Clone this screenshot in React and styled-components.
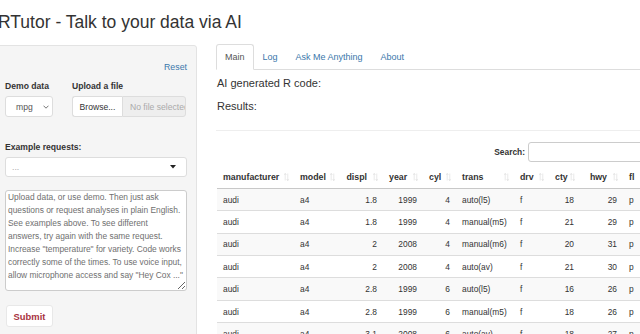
import React from 'react';
import styled, { createGlobalStyle } from 'styled-components';

const GlobalStyle = createGlobalStyle`
  html, body { margin: 0; padding: 0; overflow: hidden; background: #fff; }
  body {
    font-family: "Liberation Sans", Arial, Helvetica, sans-serif;
    color: #333;
    width: 640px;
    height: 334px;
  }
  * { box-sizing: border-box; }
`;

const Page = styled.div`
  width: 640px;
  height: 334px;
  overflow: hidden;
`;

const Title = styled.h2`
  margin: 0 0 0 -2px;
  padding-top: 12px;
  height: 43px;
  font-size: 17.5px;
  line-height: 20px;
  font-weight: normal;
  color: #333;
  white-space: nowrap;
`;

const Row = styled.div`
  display: flex;
  align-items: flex-start;
`;

const Well = styled.div`
  flex: 0 0 204px;
  margin-left: -7px;
  margin-top: 2px;
  height: 320px;
  background: #f5f5f5;
  border: 1px solid #e3e3e3;
  border-radius: 3px;
  padding: 12px 9px 12px 11px;
`;

const ResetRow = styled.div`
  display: flex;
  justify-content: flex-end;
  padding-top: 3px;
`;

const Link = styled.a`
  font-size: 8.8px;
  line-height: 13px;
  color: #3a77ab;
  text-decoration: none;
`;

const FieldRow = styled.div`
  display: flex;
  gap: 19px;
  margin-top: 6px;
`;

const Field = styled.div`
  display: flex;
  flex-direction: column;
  width: ${(p) => p.$width || 'auto'};
  margin-top: ${(p) => p.$top || 0}px;
`;

const Label = styled.label`
  font-size: 8.6px;
  font-weight: bold;
  line-height: 13px;
  margin-bottom: 3px;
  color: #333;
  white-space: nowrap;
`;

const SelectBox = styled.div`
  height: ${(p) => p.$h || 21}px;
  display: flex;
  align-items: center;
  justify-content: space-between;
  background: #fff;
  border: 1px solid ${(p) => p.$border || '#ccc'};
  border-radius: 3px;
  padding: 0 ${(p) => p.$pr || 3}px 0 ${(p) => p.$pl || 9}px;
  font-size: 8.6px;
  color: ${(p) => p.$color || '#555'};
`;

const FileInput = styled.div`
  display: flex;
  height: 21px;
  width: 114px;
  font-size: 8.6px;
`;

const BrowseButton = styled.div`
  flex: 0 0 50px;
  display: flex;
  align-items: center;
  justify-content: center;
  background: #fff;
  border: 1px solid #ddd;
  border-right: none;
  border-radius: 3px 0 0 3px;
  color: #333;
`;

const FileName = styled.div`
  flex: 1;
  display: flex;
  align-items: center;
  padding-left: 7px;
  background: #eee;
  border: 1px solid #ddd;
  border-radius: 0 3px 3px 0;
  color: #aaa;
  overflow: hidden;
  white-space: nowrap;
`;

const TextArea = styled.textarea`
  display: block;
  margin-top: 13px;
  width: 100%;
  height: 101px;
  border: 1px solid #ccc;
  border-radius: 3px;
  background: #fff;
  padding: 0 2px;
  font-family: "Liberation Sans", Arial, Helvetica, sans-serif;
  font-size: 8.4px;
  line-height: 13.05px;
  color: #555;
  overflow: hidden;
  resize: vertical;
  &::placeholder { color: #6f6f6f; opacity: 1; }
`;

const SubmitButton = styled.button`
  display: block;
  margin-top: 14px;
  margin-left: 1px;
  width: 47px;
  height: 22px;
  padding: 0;
  background: #fff;
  border: 1px solid #e8e8e8;
  border-radius: 3px;
  font-family: "Liberation Sans", Arial, Helvetica, sans-serif;
  font-size: 9.4px;
  font-weight: bold;
  color: #a83240;
`;

const Main = styled.div`
  flex: 0 0 460px;
  margin-left: 19px;
  margin-top: 1px;
`;

const Tabs = styled.ul`
  display: flex;
  margin: 0;
  padding: 0;
  list-style: none;
  border-bottom: 1px solid #ddd;
`;

const Tab = styled.li`
  margin-bottom: -1px;
  padding: 6px 8px;
  font-size: 9px;
  line-height: 12px;
  border: 1px solid ${(p) => (p.$active ? '#ddd' : 'transparent')};
  border-bottom-color: ${(p) => (p.$active ? '#fff' : 'transparent')};
  border-radius: 3px 3px 0 0;
  background: ${(p) => (p.$active ? '#fff' : 'transparent')};
  color: ${(p) => (p.$active ? '#555' : '#3a77ab')};
  white-space: nowrap;
`;

const Heading = styled.div`
  font-size: 11px;
  line-height: 15.7px;
  margin-top: ${(p) => p.$top}px;
  margin-left: 1px;
  color: #333;
`;

const Rule = styled.div`
  margin-top: 16px;
  height: 1px;
  background: #eee;
`;

const SearchRow = styled.div`
  display: flex;
  justify-content: flex-end;
  align-items: center;
  gap: 3px;
  margin-top: 11px;
`;

const SearchLabel = styled.label`
  font-size: 8.4px;
  font-weight: bold;
  color: #333;
`;

const SearchInput = styled.div`
  width: 148px;
  height: 20px;
  border: 1px solid #ccc;
  border-radius: 3px;
  background: #fff;
`;

const Table = styled.table`
  margin-top: 4px;
  margin-left: 1px;
  border-collapse: collapse;
  table-layout: fixed;
  width: 447px;
`;

const Th = styled.th`
  position: relative;
  height: 22px;
  padding: 0 ${(p) => (p.$num ? 16 : 6)}px 0 6px;
  font-size: 8.8px;
  font-weight: bold;
  text-align: ${(p) => (p.$num ? 'right' : 'left')};
  color: #333;
  border-bottom: 1px solid #c8c8c8;
  white-space: nowrap;
`;

const SortIcon = styled.svg`
  position: absolute;
  right: 5px;
  top: 7px;
`;

const Tr = styled.tr`
  background: ${(p) => (p.$odd ? '#f9f9f9' : '#fff')};
`;

const Td = styled.td`
  height: 22.4px;
  padding: 0 6px;
  line-height: 12px;
  font-size: 8.4px;
  color: #333;
  text-align: ${(p) => (p.$num ? 'right' : 'left')};
  border-top: 1px solid #ddd;
  white-space: nowrap;
  overflow: hidden;
`;

const Chevron = () => (
  <svg width="6" height="4" viewBox="0 0 6 4">
    <path d="M0.5 0.7 L3 3.2 L5.5 0.7" fill="none" stroke="#666" strokeWidth="0.9" />
  </svg>
);

const Caret = () => (
  <svg width="6" height="4" viewBox="0 0 6 4">
    <path d="M0 0 L6 0 L3 3.5 Z" fill="#222" />
  </svg>
);

const Sort = () => (
  <SortIcon width="5" height="8" viewBox="0 0 5 8">
    <path d="M1.2 0.5 V7.5 M0 1.8 L1.2 0.5 L2.4 1.8 M3.8 0.5 V7.5 M2.6 6.2 L3.8 7.5 L5 6.2" fill="none" stroke="#000" strokeOpacity="0.1" strokeWidth="0.9" />
  </SortIcon>
);

const columns = [
  { key: 'manufacturer', width: 77 },
  { key: 'model', width: 46 },
  { key: 'displ', width: 43, num: true },
  { key: 'year', width: 40, num: true },
  { key: 'cyl', width: 33, num: true },
  { key: 'trans', width: 58 },
  { key: 'drv', width: 35 },
  { key: 'cty', width: 31, num: true },
  { key: 'hwy', width: 43, num: true },
  { key: 'fl', width: 41 },
];

const rows = [
  ['audi', 'a4', '1.8', '1999', '4', 'auto(l5)', 'f', '18', '29', 'p'],
  ['audi', 'a4', '1.8', '1999', '4', 'manual(m5)', 'f', '21', '29', 'p'],
  ['audi', 'a4', '2', '2008', '4', 'manual(m6)', 'f', '20', '31', 'p'],
  ['audi', 'a4', '2', '2008', '4', 'auto(av)', 'f', '21', '30', 'p'],
  ['audi', 'a4', '2.8', '1999', '6', 'auto(l5)', 'f', '16', '26', 'p'],
  ['audi', 'a4', '2.8', '1999', '6', 'manual(m5)', 'f', '18', '26', 'p'],
  ['audi', 'a4', '3.1', '2008', '6', 'auto(av)', 'f', '18', '27', 'p'],
];

const placeholder =
  'Upload data, or use demo. Then just ask\n' +
  'questions or request analyses in plain English.\n' +
  'See examples above. To see different\n' +
  'answers, try again with the same request.\n' +
  'Increase "temperature" for variety. Code works\n' +
  'correctly some of the times. To use voice input,\n' +
  'allow microphone access and say "Hey Cox ..."';

export default function App() {
  return (
    <Page>
      <GlobalStyle />
      <Title>RTutor - Talk to your data via AI</Title>
      <Row>
        <Well>
          <ResetRow>
            <Link href="#">Reset</Link>
          </ResetRow>
          <FieldRow>
            <Field $width="48px">
              <Label>Demo data</Label>
              <SelectBox $pl={10} $pr={3} $border="#ddd">
                <span>mpg</span>
                <Chevron />
              </SelectBox>
            </Field>
            <Field>
              <Label>Upload a file</Label>
              <FileInput>
                <BrowseButton>Browse...</BrowseButton>
                <FileName>No file selected</FileName>
              </FileInput>
            </Field>
          </FieldRow>
          <Field $top={24}>
            <Label>Example requests:</Label>
            <SelectBox $h={20} $pl={6} $pr={10} $color="#aaa" $border="#ddd">
              <span>...</span>
              <Caret />
            </SelectBox>
          </Field>
          <TextArea placeholder={placeholder} />
          <SubmitButton>Submit</SubmitButton>
        </Well>
        <Main>
          <Tabs>
            <Tab $active>Main</Tab>
            <Tab>Log</Tab>
            <Tab>Ask Me Anything</Tab>
            <Tab>About</Tab>
          </Tabs>
          <Heading $top={6}>AI generated R code:</Heading>
          <Heading $top={7}>Results:</Heading>
          <Rule />
          <SearchRow>
            <SearchLabel>Search:</SearchLabel>
            <SearchInput />
          </SearchRow>
          <Table>
            <colgroup>
              {columns.map((c) => (
                <col key={c.key} style={{ width: c.width }} />
              ))}
            </colgroup>
            <thead>
              <tr>
                {columns.map((c) => (
                  <Th key={c.key} $num={c.num}>
                    {c.key}
                    <Sort />
                  </Th>
                ))}
              </tr>
            </thead>
            <tbody>
              {rows.map((r, i) => (
                <Tr key={i} $odd={i % 2 === 0}>
                  {r.map((v, j) => (
                    <Td key={j} $num={columns[j].num}>
                      {v}
                    </Td>
                  ))}
                </Tr>
              ))}
            </tbody>
          </Table>
        </Main>
      </Row>
    </Page>
  );
}
